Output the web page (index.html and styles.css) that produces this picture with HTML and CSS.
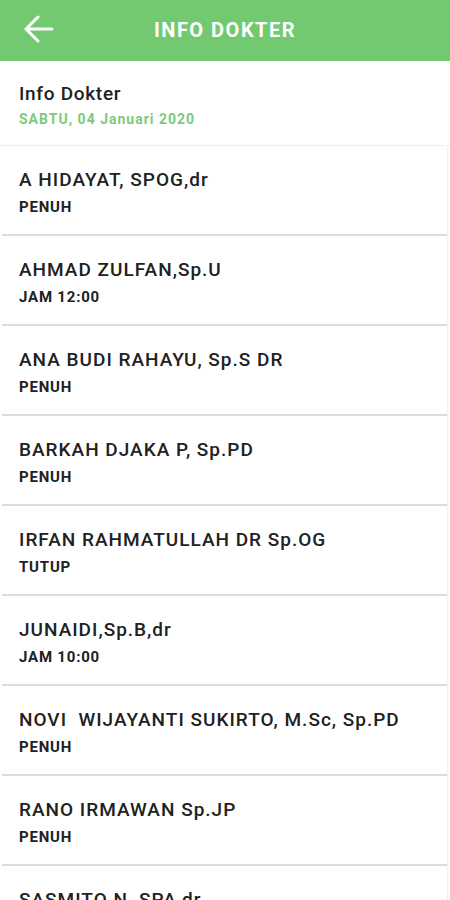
FILE: index.html
```html
<!DOCTYPE html>
<html lang="id">
<head>
  <meta charset="UTF-8">
  <meta name="viewport" content="width=device-width, initial-scale=1.0">
  <title>Info Dokter</title>
  <link rel="stylesheet" href="styles.css">
</head>
<body>
  <header class="topbar">
    <a class="back" href="#" aria-label="Kembali">
      <svg width="30" height="30" viewBox="0 0 30 30">
        <path d="M28 14H2M14 2L2 14l12 12" fill="none" stroke="#fff" stroke-width="3" stroke-linecap="round" stroke-linejoin="round"/>
      </svg>
    </a>
    <h1>INFO DOKTER</h1>
    <span></span>
  </header>

  <div class="info">
    <h2>Info Dokter</h2>
    <p class="date">SABTU, 04 Januari 2020</p>
  </div>

  <ul class="doctors">
    <li class="doctor"><div class="name">A HIDAYAT, SPOG,dr</div><div class="status">PENUH</div></li>
    <li class="doctor"><div class="name">AHMAD ZULFAN,Sp.U</div><div class="status">JAM 12:00</div></li>
    <li class="doctor"><div class="name">ANA BUDI RAHAYU, Sp.S DR</div><div class="status">PENUH</div></li>
    <li class="doctor"><div class="name">BARKAH DJAKA P, Sp.PD</div><div class="status">PENUH</div></li>
    <li class="doctor"><div class="name">IRFAN RAHMATULLAH DR Sp.OG</div><div class="status">TUTUP</div></li>
    <li class="doctor"><div class="name">JUNAIDI,Sp.B,dr</div><div class="status">JAM 10:00</div></li>
    <li class="doctor"><div class="name">NOVI&nbsp; WIJAYANTI SUKIRTO, M.Sc, Sp.PD</div><div class="status">PENUH</div></li>
    <li class="doctor"><div class="name">RANO IRMAWAN Sp.JP</div><div class="status">PENUH</div></li>
    <li class="doctor"><div class="name">SASMITO N, SPA,dr</div><div class="status">PENUH</div></li>
  </ul>
</body>
</html>
```

FILE: styles.css
```css
body {
  margin: 0;
  font-family: Roboto, "Liberation Sans", Arial, sans-serif;
  background-color: #fff;
  color: #212121;
}

.topbar {
  height: 61px;
  background-color: #73c96f;
  display: grid;
  grid-template-columns: 1fr auto 1fr;
  align-items: center;
}

.back {
  display: flex;
  margin-left: 24px;
  margin-top: -2px;
}

.topbar h1 {
  margin: -1px 0 0;
  color: #fff;
  font-size: 20px;
  font-weight: 700;
  letter-spacing: 1.5px;
}

.info {
  padding: 21px 19px 16px;
  border-bottom: 1px solid #ececec;
}

.info h2 {
  margin: 0;
  font-size: 19px;
  line-height: 24px;
  font-weight: 500;
  letter-spacing: 0.7px;
}

.date {
  margin: 3px 0 0;
  font-size: 14px;
  line-height: 20px;
  font-weight: 700;
  letter-spacing: 1px;
  color: #7ec97b;
}

.doctors {
  list-style: none;
  margin: 0;
  padding: 0;
}

.doctor {
  padding: 22px 19px 17px;
  margin-left: 2px;
  margin-right: 3px;
  border-bottom: 2px solid #dcdcdc;
  box-shadow: 1px 0 0 #f0f0f0;
}

.doctor .name {
  font-size: 19px;
  line-height: 24px;
  font-weight: 500;
  letter-spacing: 1px;
  margin-left: -2px;
  white-space: nowrap;
}

.doctor .status {
  margin-top: 5px;
  margin-left: -2px;
  font-size: 15px;
  line-height: 20px;
  font-weight: 700;
  letter-spacing: 0.8px;
}
```
